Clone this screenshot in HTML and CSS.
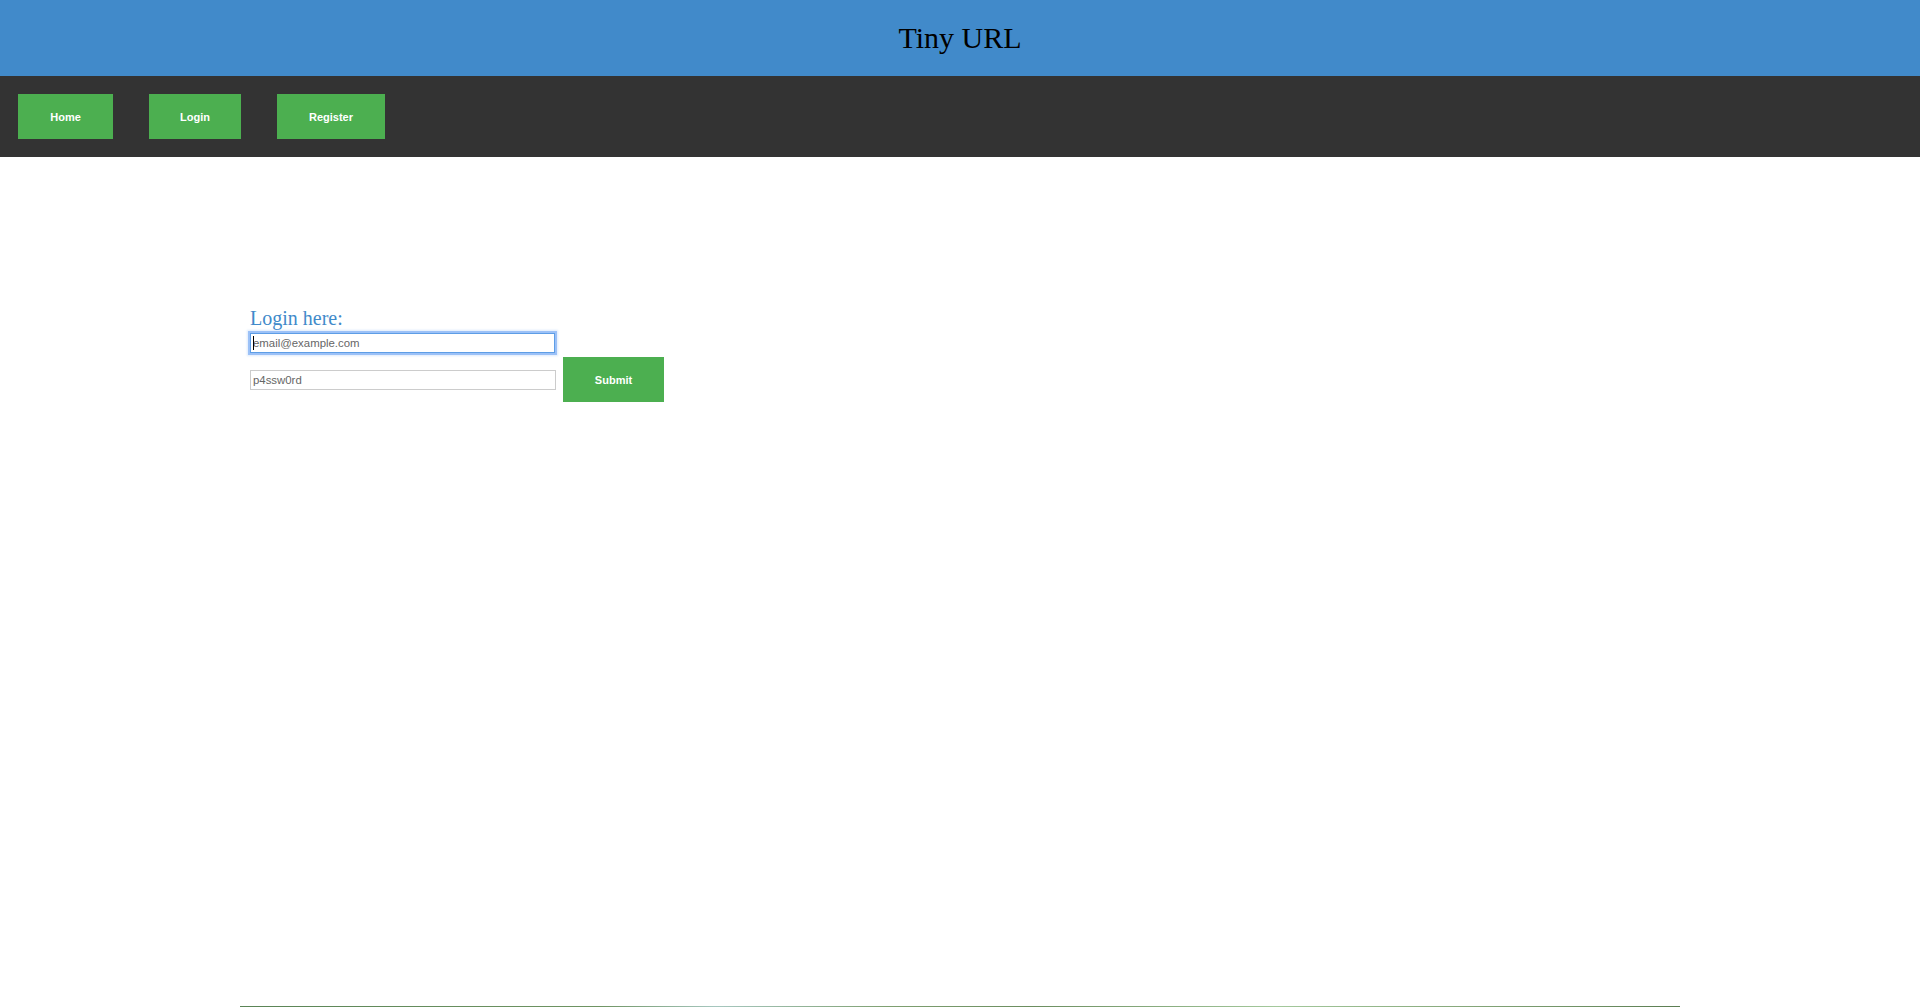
FILE: index.html
```html
<!DOCTYPE html>
<html lang="en">
<head>
<meta charset="utf-8">
<title>Tiny URL</title>
<link rel="stylesheet" href="styles.css">
</head>
<body>
  <header class="site-header">
    <h1 class="site-title">Tiny URL</h1>
  </header>
  <nav class="site-nav">
    <a class="btn btn-home" href="#">Home</a>
    <a class="btn btn-login" href="#">Login</a>
    <a class="btn btn-register" href="#">Register</a>
  </nav>
  <main class="main">
    <form class="login-form" onsubmit="return false">
      <h3 class="login-title">Login here:</h3>
      <div class="field-wrap">
        <input class="field field-focused" type="email" placeholder="email@example.com">
        <span class="caret"></span>
      </div>
      <div class="form-row">
        <input class="field" type="password" placeholder="p4ssw0rd">
        <button class="btn btn-submit" type="submit">Submit</button>
      </div>
    </form>
  </main>
  <hr class="footer-rule">
</body>
</html>
```
FILE: styles.css
```css
html, body {
  margin: 0;
  padding: 0;
}

body {
  min-height: 1007px;
  display: flex;
  flex-direction: column;
  background: #ffffff;
  font-family: "Liberation Serif", "Times New Roman", serif;
}

.site-header {
  height: 76px;
  background: #418aca;
  display: flex;
  align-items: center;
  justify-content: center;
}

.site-title {
  margin: 0;
  font-family: "Liberation Serif", "Times New Roman", serif;
  font-weight: normal;
  font-size: 30px;
  line-height: 34px;
  color: #000000;
}

.site-nav {
  height: 81px;
  box-sizing: border-box;
  background: #333333;
  display: flex;
  align-items: center;
  padding-left: 18px;
  gap: 36px;
}

.btn {
  display: inline-flex;
  align-items: center;
  justify-content: center;
  height: 45px;
  padding: 0;
  box-sizing: border-box;
  background: #4caf50;
  color: #ffffff;
  font-family: "Liberation Sans", Arial, sans-serif;
  font-size: 11px;
  font-weight: bold;
  text-decoration: none;
  border: none;
  cursor: pointer;
}

.btn-home {
  width: 95px;
}

.btn-login {
  width: 92px;
}

.btn-register {
  width: 108px;
}

.main {
  padding: 150px 0 0 250px;
}

.login-form {
  display: flex;
  flex-direction: column;
  align-items: flex-start;
}

.login-title {
  margin: 0;
  font-family: "Liberation Serif", "Times New Roman", serif;
  font-weight: normal;
  font-size: 20px;
  line-height: 23px;
  color: #418aca;
}

.field-wrap {
  position: relative;
  margin-top: 3px;
}

.field {
  width: 306px;
  height: 20px;
  box-sizing: border-box;
  margin: 0;
  padding: 0 2px;
  border: 1px solid #cccccc;
  font-family: "Liberation Sans", Arial, sans-serif;
  font-size: 11.4px;
  color: #333333;
  background: #ffffff;
  outline: none;
  display: block;
}

.field::placeholder {
  color: #666666;
}

.field-focused {
  width: 305px;
  border: 1px solid #5d9de6;
  box-shadow: 0 0 0 2px rgba(120, 170, 245, 0.65), 0 0 2px 3px rgba(120, 170, 245, 0.25);
}

.caret {
  position: absolute;
  left: 3px;
  top: 3px;
  width: 1px;
  height: 14px;
  background: #000000;
}

.form-row {
  display: flex;
  align-items: center;
  gap: 7px;
  margin-top: 4px;
}

.btn-submit {
  width: 101px;
}

.footer-rule {
  margin: auto auto 0 auto;
  width: 75%;
  height: 1px;
  border: none;
  background: linear-gradient(to right, #5a8456 0%, #6f9463 25%, #a6c7bf 33%, #7fa071 45%, #6b8d5f 55%, #a4c99c 72%, #86a77a 85%, #5b7d52 100%);
}
```
